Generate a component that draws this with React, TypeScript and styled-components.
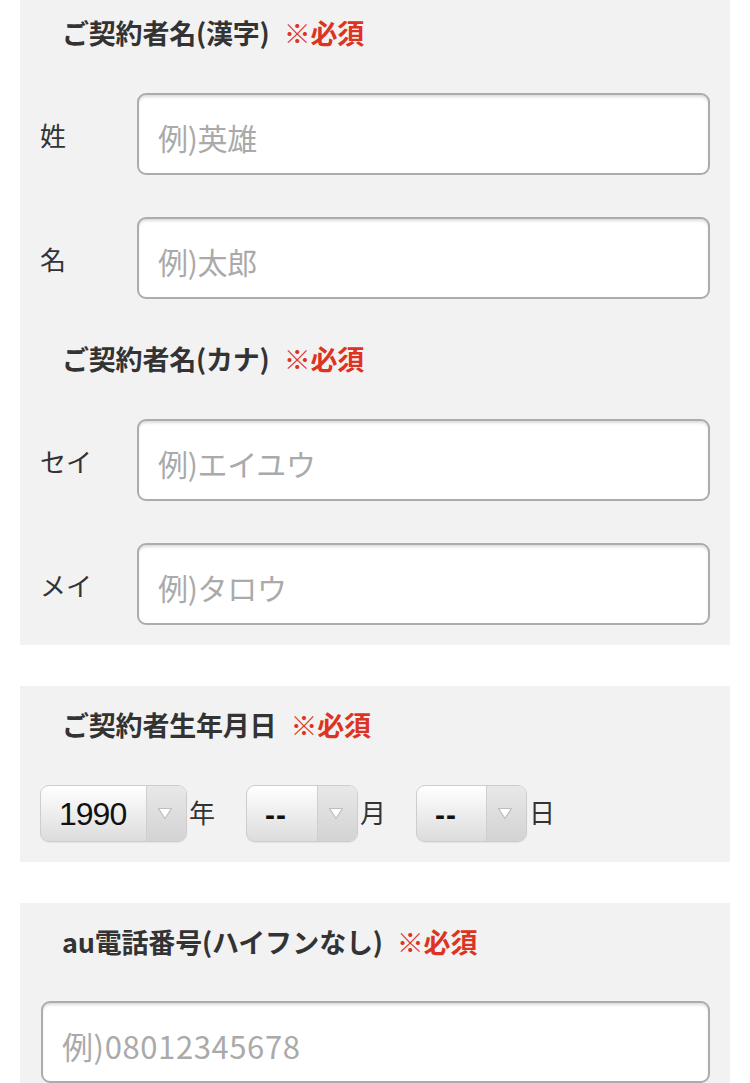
import React from "react";
import styled, { createGlobalStyle } from "styled-components";

const Global = createGlobalStyle`
  html, body { margin: 0; padding: 0; background: #fff; }
  body { font-family: "Noto Sans CJK JP", "Noto Sans", sans-serif; color: #333; }
  * { box-sizing: border-box; }
`;

const Page = styled.div`
  display: flex;
  flex-direction: column;
  gap: 41px;
  padding: 0 20px;
`;

const Panel = styled.section<{ $top: number; $gap: number }>`
  background: #f2f2f2;
  display: flex;
  flex-direction: column;
  gap: ${(p) => p.$gap}px;
  padding: ${(p) => p.$top}px 20px 20px 20px;
`;

const Title = styled.h2`
  margin: 0;
  padding-left: 22px;
  height: 36px;
  font-size: 27px;
  line-height: 32px;
  font-weight: 700;
  color: #333;
  display: flex;
  align-items: center;
  letter-spacing: -0.2px;
`;

const Required = styled.span`
  margin-left: 14px;
  color: #dd3322;
  font-weight: 700;
`;

const Mark = styled.span`
  font-weight: 400;
`;

const Row = styled.div`
  display: flex;
  align-items: center;
`;

const Label = styled.span`
  width: 97px;
  flex: none;
  font-size: 26px;
  color: #333;
  line-height: 36px;
  padding-top: 2px;
`;

const TextInput = styled.input<{ $wide?: boolean }>`
  flex: 1;
  min-width: 0;
  height: 82px;
  border: 2px solid #acacac;
  border-radius: 9px;
  background: #fff;
  box-shadow: inset 0 3px 3px -1px rgba(0, 0, 0, 0.14);
  padding: 6px 0 0 19px;
  margin-left: ${(p) => (p.$wide ? 1 : 0)}px;
  font-family: "Noto Sans CJK JP", sans-serif;
  font-size: ${(p) => (p.$wide ? 31 : 30)}px;
  letter-spacing: ${(p) => (p.$wide ? 0.6 : -0.3)}px;
  color: #333;
  outline: none;
  &::placeholder {
    color: #aaaaaa;
  }
`;

const DateRow = styled.div`
  display: flex;
  align-items: center;
`;

const Select = styled.div<{ $w: number }>`
  width: ${(p) => p.$w}px;
  height: 57px;
  flex: none;
  display: flex;
  border: 1px solid #cdcdcd;
  border-radius: 9px;
  overflow: hidden;
  background: linear-gradient(#ffffff, #dcdcdc);
  box-shadow: 0 1px 1px rgba(0, 0, 0, 0.06);
`;

const SelectValue = styled.span<{ $bold?: boolean; $pad: number }>`
  flex: 1;
  display: flex;
  align-items: center;
  padding-left: ${(p) => p.$pad}px;
  padding-top: 2px;
  font-family: "Liberation Sans", Arial, sans-serif;
  font-size: ${(p) => (p.$bold ? 30 : 32)}px;
  font-weight: ${(p) => (p.$bold ? 700 : 400)};
  letter-spacing: ${(p) => (p.$bold ? 1 : -1)}px;
  color: #111;
`;

const ArrowBox = styled.span`
  width: 40px;
  flex: none;
  display: flex;
  align-items: center;
  justify-content: center;
  padding-right: 3px;
  border-left: 1px solid #cfcfcf;
  background: linear-gradient(#e8e8e8, #d3d3d3);
`;

const Unit = styled.span<{ $after: number }>`
  font-size: 26px;
  color: #333;
  margin: 0 ${(p) => p.$after}px 0 2px;
  line-height: 36px;
  padding-bottom: 4px;
`;

const Arrow = () => (
  <svg width="16" height="13" viewBox="0 0 16 13">
    <path d="M1.5 1.5 L14.5 1.5 L8 11.5 Z" fill="#ffffff" stroke="#bdbdbd" strokeWidth="1.2" strokeLinejoin="round" />
  </svg>
);

type SelProps = { w: number; value: string; bold?: boolean; pad: number };
const DateSelect = ({ w, value, bold, pad }: SelProps) => (
  <Select $w={w}>
    <SelectValue $bold={bold} $pad={pad}>{value}</SelectValue>
    <ArrowBox>
      <Arrow />
    </ArrowBox>
  </Select>
);

const Req = () => (
  <Required>
    <Mark>※</Mark>必須
  </Required>
);

export default function App() {
  return (
    <>
      <Global />
      <Page>
        <Panel $top={15} $gap={42}>
          <Title>
            ご契約者名(漢字)
            <Req />
          </Title>
          <Row>
            <Label>姓</Label>
            <TextInput placeholder="例)英雄" />
          </Row>
          <Row>
            <Label>名</Label>
            <TextInput placeholder="例)太郎" />
          </Row>
          <Title>
            ご契約者名(カナ)
            <Req />
          </Title>
          <Row>
            <Label>セイ</Label>
            <TextInput placeholder="例)エイユウ" />
          </Row>
          <Row>
            <Label>メイ</Label>
            <TextInput placeholder="例)タロウ" />
          </Row>
        </Panel>

        <Panel $top={21} $gap={42}>
          <Title>
            ご契約者生年月日
            <Req />
          </Title>
          <DateRow>
            <DateSelect w={147} value="1990" pad={18} />
            <Unit $after={31}>年</Unit>
            <DateSelect w={112} value="--" bold pad={18} />
            <Unit $after={30}>月</Unit>
            <DateSelect w={111} value="--" bold pad={18} />
            <Unit $after={0}>日</Unit>
          </DateRow>
        </Panel>

        <Panel $top={21} $gap={41}>
          <Title>
            au電話番号(ハイフンなし)
            <Req />
          </Title>
          <Row>
            <TextInput $wide placeholder="例)08012345678" />
          </Row>
        </Panel>
      </Page>
    </>
  );
}
